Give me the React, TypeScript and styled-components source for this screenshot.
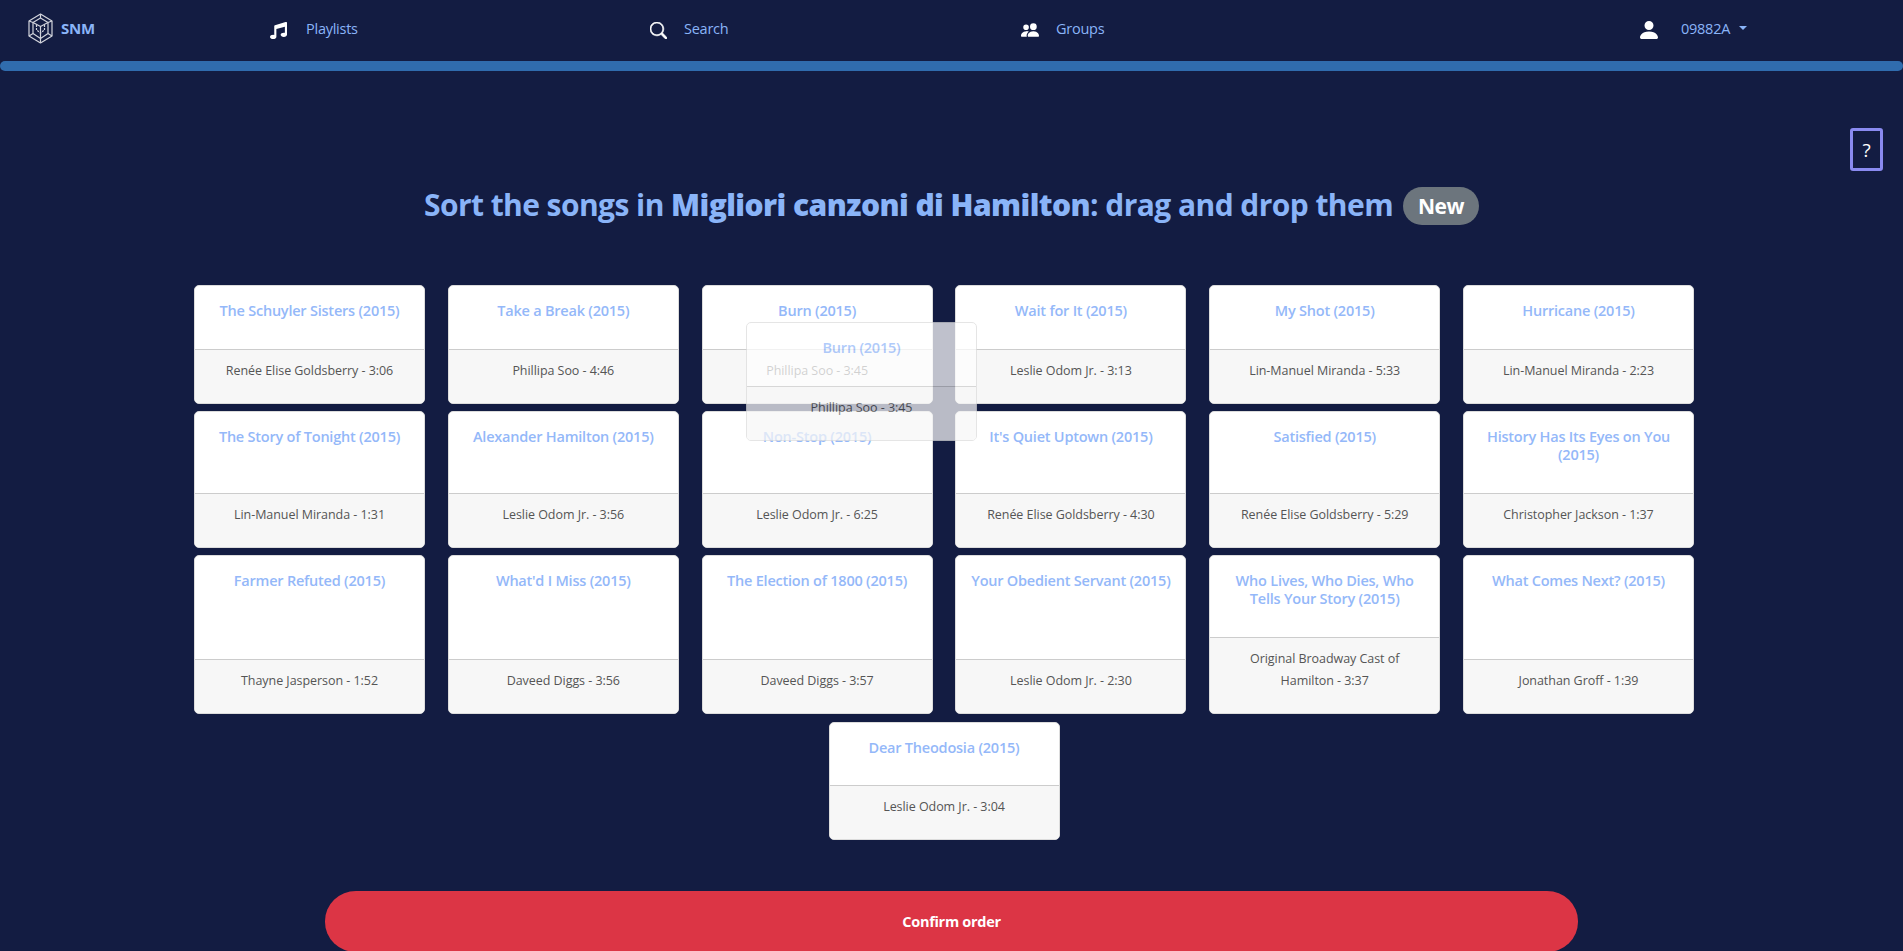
import React from "react";
import styled, { createGlobalStyle } from "styled-components";
import { FaMusic } from "react-icons/fa";
import { BsPeopleFill, BsPersonFill, BsSearch } from "react-icons/bs";

const Global = createGlobalStyle`
  html, body { margin: 0; padding: 0; background: #131c42; overflow: hidden; height: 100%; }
  body { font-family: "Open Sans", "Noto Sans", sans-serif; }
  * { box-sizing: border-box; }
`;

const Page = styled.div`
  position: relative;
  width: 1903px;
  height: 951px;
  overflow: hidden;
  background: #131c42;
`;

const Nav = styled.nav`
  height: 61px;
  display: grid;
  grid-template-columns: 270px 380px 371px 616px 1fr;
  align-items: center;
  padding-bottom: 5px;
`;

const Brand = styled.a`
  display: flex;
  align-items: center;
  gap: 8px;
  color: #8ab4f8;
  font-size: 15px;
  font-weight: 700;
  letter-spacing: -0.25px;
  padding-left: 28px;
`;

const NavItem = styled.a<{ $gap?: number }>`
  display: flex;
  align-items: center;
  gap: ${(p) => p.$gap ?? 17}px;
  color: #8ab4f8;
  font-size: 14.5px;
  letter-spacing: -0.25px;
  svg { color: #fff; flex: none; position: relative; top: 2px; }
`;

const Caret = styled.span`
  display: inline-block;
  margin-left: 9px;
  border-top: 4.5px solid #8ab4f8;
  border-left: 4.5px solid transparent;
  border-right: 4.5px solid transparent;
`;

const UserName = styled.span`
  display: flex;
  align-items: center;
`;

const Divider = styled.div`
  height: 10px;
  background: #306cae;
  border-radius: 5px;
`;

const HelpRow = styled.div`
  display: flex;
  justify-content: flex-end;
  padding: 57px 20px 0 0;
  height: 100px;
`;

const HelpButton = styled.button`
  width: 33px;
  height: 43px;
  background: transparent;
  border: 3px solid #8a8af0;
  border-radius: 3px;
  color: #fff;
  font-family: inherit;
  font-size: 19px;
  padding: 0;
`;

const Heading = styled.h3`
  margin: 16px 0 0;
  height: 38px;
  display: flex;
  justify-content: center;
  align-items: center;
  gap: 10px;
  color: #8ab4f8;
  font-size: 30px;
  font-weight: 700;
  letter-spacing: -0.57px;
  white-space: pre;
`;

const HeadingText = styled.span`
  padding-bottom: 4px;
`;

const Strong = styled.b`
  font-weight: 800;
`;

const Badge = styled.span`
  width: 76px;
  height: 38px;
  display: flex;
  align-items: center;
  justify-content: center;
  border-radius: 19px;
  background: #6c757d;
  color: #fff;
  font-size: 21px;
  font-weight: 700;
  letter-spacing: -0.4px;
`;

const Board = styled.div`
  margin-top: 60px;
  padding-right: 15px;
  display: flex;
  justify-content: center;
`;

const Grid = styled.div`
  width: 1501px;
  display: flex;
  flex-wrap: wrap;
  justify-content: center;
  column-gap: 22.8px;
  row-gap: 7.6px;
`;

const Card = styled.div`
  width: 231px;
  display: flex;
  flex-direction: column;
  background: #fff;
  border: 1px solid #dcdcdc;
  border-radius: 5px;
  overflow: hidden;
`;

const CardBody = styled.div`
  flex: 1;
  min-height: 62.6px;
  padding: 16px 12px 28.6px;
  text-align: center;
  color: #94b8f9;
  font-size: 14.5px;
  font-weight: 600;
  line-height: 18px;
  letter-spacing: -0.22px;
`;

const CardFoot = styled.div`
  padding: 10px 20px 21px;
  background: #f7f7f7;
  border-top: 1px solid #cccccc;
  text-align: center;
  color: #555555;
  font-size: 12.5px;
  line-height: 22px;
  letter-spacing: -0.05px;
`;

const Ghost = styled(Card)`
  position: absolute;
  left: 746px;
  top: 322px;
  height: 119px;
  opacity: 0.73;
`;

const ConfirmWrap = styled.div`
  margin-top: 50.8px;
  padding: 0 325px;
`;

const Confirm = styled.button`
  width: 100%;
  height: 61px;
  border: 0;
  border-radius: 31px / 30px;
  background: #dc3545;
  color: #fff;
  font-family: inherit;
  font-size: 14.5px;
  font-weight: 700;
  letter-spacing: -0.3px;
`;

const songs: [string, string][] = [
  ["The Schuyler Sisters (2015)", "Renée Elise Goldsberry - 3:06"],
  ["Take a Break (2015)", "Phillipa Soo - 4:46"],
  ["Burn (2015)", "Phillipa Soo - 3:45"],
  ["Wait for It (2015)", "Leslie Odom Jr. - 3:13"],
  ["My Shot (2015)", "Lin-Manuel Miranda - 5:33"],
  ["Hurricane (2015)", "Lin-Manuel Miranda - 2:23"],
  ["The Story of Tonight (2015)", "Lin-Manuel Miranda - 1:31"],
  ["Alexander Hamilton (2015)", "Leslie Odom Jr. - 3:56"],
  ["Non-Stop (2015)", "Leslie Odom Jr. - 6:25"],
  ["It's Quiet Uptown (2015)", "Renée Elise Goldsberry - 4:30"],
  ["Satisfied (2015)", "Renée Elise Goldsberry - 5:29"],
  ["History Has Its Eyes on You (2015)", "Christopher Jackson - 1:37"],
  ["Farmer Refuted (2015)", "Thayne Jasperson - 1:52"],
  ["What'd I Miss (2015)", "Daveed Diggs - 3:56"],
  ["The Election of 1800 (2015)", "Daveed Diggs - 3:57"],
  ["Your Obedient Servant (2015)", "Leslie Odom Jr. - 2:30"],
  ["Who Lives, Who Dies, Who Tells Your Story (2015)", "Original Broadway Cast of Hamilton - 3:37"],
  ["What Comes Next? (2015)", "Jonathan Groff - 1:39"],
  ["Dear Theodosia (2015)", "Leslie Odom Jr. - 3:04"],
];

const Logo = () => (
  <svg width="25" height="31" viewBox="0 0 25 31" fill="none" stroke="#d2d4dc" strokeWidth="1.2" strokeLinejoin="round">
    <path d="M12.5 1 24 8v15l-11.5 7L1 23V8z" />
    <path d="M12.5 5 20 9.5v11l-7.5 5-7.5-5v-11z" />
    <path d="M1 8l4 1.5M24 8l-4 1.5M1 23l4-2.500M24 23l-4-2.500M12.500 1v4M12.500 30v-4.500" />
    <path d="M5 9.500l7.500 4 7.500-4M12.500 13.500v12" />
    <path d="M8.500 12v5l4 3 4-3v-5" strokeDasharray="2 1" />
  </svg>
);

export default function App() {
  return (
    <Page>
      <Global />
      <Nav>
        <Brand>
          <Logo />
          <span>SNM</span>
        </Brand>
        <NavItem $gap={19}>
          <FaMusic size={17} />
          <span>Playlists</span>
        </NavItem>
        <NavItem>
          <BsSearch size={17} strokeWidth={0.6} />
          <span>Search</span>
        </NavItem>
        <NavItem>
          <BsPeopleFill size={18} />
          <span>Groups</span>
        </NavItem>
        <NavItem $gap={20}>
          <BsPersonFill size={24} />
          <UserName>
            09882A
            <Caret />
          </UserName>
        </NavItem>
      </Nav>
      <Divider />
      <HelpRow>
        <HelpButton>?</HelpButton>
      </HelpRow>
      <Heading>
        <HeadingText>
          Sort the songs in <Strong>Migliori canzoni di Hamilton</Strong>: drag and drop them
        </HeadingText>
        <Badge>New</Badge>
      </Heading>
      <Board>
        <Grid>
          {songs.map(([title, meta]) => (
            <Card key={title}>
              <CardBody>{title}</CardBody>
              <CardFoot>{meta}</CardFoot>
            </Card>
          ))}
        </Grid>
      </Board>
      <ConfirmWrap>
        <Confirm>Confirm order</Confirm>
      </ConfirmWrap>
      <Ghost>
        <CardBody>Burn (2015)</CardBody>
        <CardFoot>Phillipa Soo - 3:45</CardFoot>
      </Ghost>
    </Page>
  );
}
